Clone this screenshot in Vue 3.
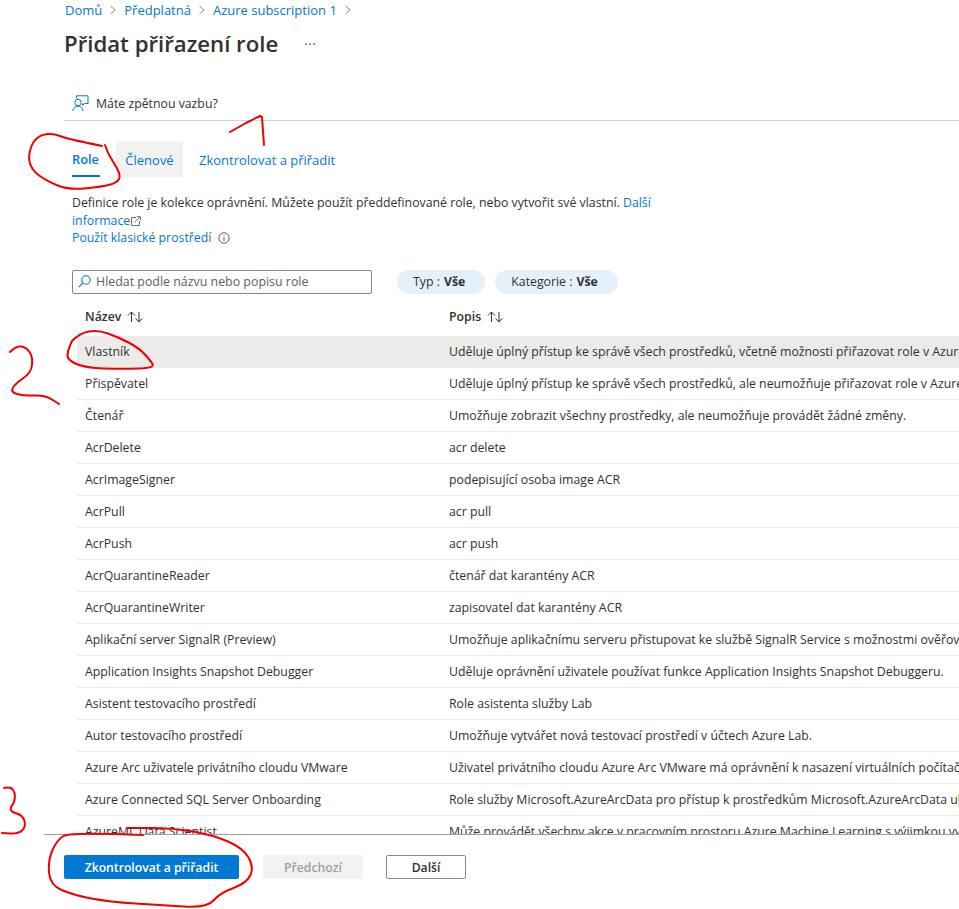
<script setup>
const crumbs = ['Domů', 'Předplatná', 'Azure subscription 1'];

const roles = [
  ['Vlastník', 'Uděluje úplný přístup ke správě všech prostředků, včetně možnosti přiřazovat role v Azure RBAC.'],
  ['Přispěvatel', 'Uděluje úplný přístup ke správě všech prostředků, ale neumožňuje přiřazovat role v Azure RBAC.'],
  ['Čtenář', 'Umožňuje zobrazit všechny prostředky, ale neumožňuje provádět žádné změny.'],
  ['AcrDelete', 'acr delete'],
  ['AcrImageSigner', 'podepisující osoba image ACR'],
  ['AcrPull', 'acr pull'],
  ['AcrPush', 'acr push'],
  ['AcrQuarantineReader', 'čtenář dat karantény ACR'],
  ['AcrQuarantineWriter', 'zapisovatel dat karantény ACR'],
  ['Aplikační server SignalR (Preview)', 'Umožňuje aplikačnímu serveru přistupovat ke službě SignalR Service s možnostmi ověřování AAD.'],
  ['Application Insights Snapshot Debugger', 'Uděluje oprávnění uživatele používat funkce Application Insights Snapshot Debuggeru.'],
  ['Asistent testovacího prostředí', 'Role asistenta služby Lab'],
  ['Autor testovacího prostředí', 'Umožňuje vytvářet nová testovací prostředí v účtech Azure Lab.'],
  ['Azure Arc uživatele privátního cloudu VMware', 'Uživatel privátního cloudu Azure Arc VMware má oprávnění k nasazení virtuálních počítačů.'],
  ['Azure Connected SQL Server Onboarding', 'Role služby Microsoft.AzureArcData pro přístup k prostředkům Microsoft.AzureArcData uloženým'],
  ['AzureML Data Scientist', 'Může provádět všechny akce v pracovním prostoru Azure Machine Learning s výjimkou vytváření'],
];

// smooths the marker points through their midpoints
const smooth = (pts) => {
  let d = `M${pts[0][0]} ${pts[0][1]}`;
  for (let i = 1; i < pts.length - 1; i++) {
    const mx = (pts[i][0] + pts[i + 1][0]) / 2;
    const my = (pts[i][1] + pts[i + 1][1]) / 2;
    d += ` Q${pts[i][0]} ${pts[i][1]} ${mx} ${my}`;
  }
  const last = pts[pts.length - 1];
  return d + ` L${last[0]} ${last[1]}`;
};

const scribbles = [
  smooth([[102, 146], [83, 142], [65, 138], [55, 134], [43, 134], [33, 141], [28, 157], [32, 170], [45, 180], [68, 190], [100, 187], [117, 183], [121, 175], [112, 160], [108, 153], [105, 145]]),
  'M230 132 L246 123 L260 116 L262 117 L264 145',
  smooth([[72, 341], [80, 333], [98, 330], [118, 337], [139, 348], [150, 360], [155, 368], [122, 369], [86, 368], [67, 360], [68, 350], [72, 341]]),
  smooth([[10, 352], [16, 346], [26, 347], [33, 357], [31, 373], [16, 383], [10, 392], [24, 396], [45, 395], [59, 404]]),
  smooth([[4, 788], [13, 786], [16, 800], [8, 811], [23, 815], [26, 827], [18, 834], [2, 833]]),
  smooth([[143, 835], [70, 832], [57, 840], [48, 860], [50, 885], [73, 895], [110, 902], [160, 905], [207, 908], [220, 893], [247, 883], [254, 867], [243, 848], [213, 835], [173, 828], [127, 828]]),
];
</script>

<template>
  <div class="page">
    <nav class="crumbs">
      <template v-for="c in crumbs" :key="c">
        <a>{{ c }}</a>
        <svg class="chev" width="8" height="10" viewBox="0 0 8 10"><path d="M1.5 1 L6 5 L1.5 9" fill="none" stroke="#8a8886" /></svg>
      </template>
    </nav>

    <div class="title-row">
      <h1>Přidat přiřazení role</h1>
      <span class="more">···</span>
    </div>

    <div class="feedback">
      <svg width="17" height="17" viewBox="0 0 17 17" fill="none" stroke="#0078d4">
        <circle cx="6" cy="7.5" r="3.2" />
        <path d="M0.8 16 C1.2 12.8 3.4 11.2 6 11.2 C8.6 11.2 10.6 12.8 11 16" />
        <path d="M4.5 3.5 V0.8 H16 V8.5 H12.5 L10.5 10.5 V8.5" />
      </svg>
      <span>Máte zpětnou vazbu?</span>
    </div>

    <div class="tabs">
      <div class="tab active">Role</div>
      <div class="tab hovered">Členové</div>
      <div class="tab">Zkontrolovat a přiřadit</div>
    </div>

    <div class="intro">
      <p>Definice role je kolekce oprávnění. Můžete použít předdefinované role, nebo vytvořit své vlastní. <a>Další informace</a>
        <svg class="ext" width="10" height="10" viewBox="0 0 10 10" fill="none" stroke="#605e5c" stroke-width="0.9"><path d="M5 1.5 H0.5 V9.5 H8.5 V5" /><path d="M3.5 6.5 L9 1 M5.8 0.6 H9.4 V4.2" /></svg>
      </p>
      <p class="classic">
        <a>Použít klasické prostředí</a>
        <svg width="12" height="12" viewBox="0 0 12 12" fill="none" stroke="#605e5c"><circle cx="6" cy="6" r="5.2" /><path d="M6 5 V9 M6 3 V4" /></svg>
      </p>
    </div>

    <div class="filters">
      <div class="search">
        <svg width="13" height="13" viewBox="0 0 13 13" fill="none" stroke="#0078d4" stroke-width="1.1"><circle cx="8" cy="5" r="4.2" /><path d="M5 8 L0.8 12.2" /></svg>
        <span>Hledat podle názvu nebo popisu role</span>
      </div>
      <div class="pill">Typ : <b>Vše</b></div>
      <div class="pill">Kategorie : <b>Vše</b></div>
    </div>

    <div class="table">
      <div class="row head">
        <div class="cell">Název
          <svg class="sort" width="17" height="12" viewBox="0 0 17 12" fill="none" stroke="#323130"><path d="M4.5 11 V1 M1 4.5 L4.5 1 L8 4.5" /><path d="M12 1 V11 M8.7 7.5 L12 11 L15.5 7.5" /></svg>
        </div>
        <div class="cell">Popis
          <svg class="sort" width="17" height="12" viewBox="0 0 17 12" fill="none" stroke="#323130"><path d="M4.5 11 V1 M1 4.5 L4.5 1 L8 4.5" /><path d="M12 1 V11 M8.7 7.5 L12 11 L15.5 7.5" /></svg>
        </div>
      </div>
      <div v-for="(r, i) in roles" :key="r[0]" class="row" :class="{ selected: i === 0 }">
        <div class="cell">{{ r[0] }}</div>
        <div class="cell">{{ r[1] }}</div>
      </div>
    </div>

    <footer class="actions">
      <button class="btn primary">Zkontrolovat a přiřadit</button>
      <button class="btn disabled">Předchozí</button>
      <button class="btn plain">Další</button>
    </footer>

    <!-- red marker annotations drawn over the page -->
    <svg class="marks" width="959" height="909" viewBox="0 0 959 909" fill="none" stroke="#f00000" stroke-width="2" stroke-linejoin="round" stroke-linecap="round">
      <path v-for="d in scribbles" :key="d" :d="d" />
    </svg>
  </div>
</template>

<style>
body {
  margin: 0;
  background: #fff;
}
</style>

<style scoped>
.page {
  position: relative;
  width: 959px;
  height: 909px;
  display: flex;
  flex-direction: column;
  overflow: hidden;
  font-family: "Open Sans", "Liberation Sans", sans-serif;
  font-size: 12.3px;
  color: #323130;
}

a {
  color: #0078d4;
}

.crumbs {
  height: 20px;
  padding-left: 65px;
  display: flex;
  align-items: center;
  gap: 7px;
  font-size: 13px;
}

.title-row {
  height: 48px;
  padding-left: 64px;
  display: flex;
  align-items: center;
  gap: 26px;
}

h1 {
  margin: 0;
  font-size: 22.2px;
  font-weight: 600;
  line-height: 28px;
}

.more {
  font-size: 12px;
  font-weight: 400;
  letter-spacing: 1px;
}

.feedback {
  height: 53px;
  margin: 0 0 0 64px;
  padding: 26px 0 8px 8px;
  box-sizing: border-box;
  display: flex;
  align-items: center;
  gap: 7px;
  border-bottom: 1px solid #d6d6d6;
}

.tabs {
  margin: 20px 0 0 72px;
  height: 36px;
  display: flex;
  color: #0078d4;
  font-size: 13px;
}

.tab {
  display: flex;
  align-items: center;
  padding-top: 2px;
  box-sizing: border-box;
}

.tab.active {
  width: 28px;
  margin-right: 16px;
  font-size: 12.8px;
  font-weight: 600;
  border-bottom: 2px solid #0078d4;
}

.tab.hovered {
  background: #f3f2f1;
  width: 67px;
  justify-content: center;
  margin-right: 16px;
}

.intro {
  margin: 17px 0 0 72px;
  width: 600px;
  line-height: 17.5px;
}

.intro p {
  margin: 0;
}

.classic {
  display: flex;
  align-items: center;
  gap: 7px;
}

.ext {
  margin-left: 1px;
  vertical-align: -1px;
}

.filters {
  margin: 23px 0 0 72px;
  display: flex;
  align-items: center;
  height: 24px;
}

.search {
  width: 300px;
  height: 24px;
  box-sizing: border-box;
  border: 1px solid #8a8886;
  border-radius: 2px;
  display: flex;
  align-items: center;
  gap: 5px;
  padding-left: 5px;
  color: #605e5c;
  margin-right: 25px;
  font-size: 12.4px;
}

.pill {
  height: 24px;
  padding: 0 20px 0 16px;
  border-radius: 12px;
  background: #e5f1fa;
  display: flex;
  align-items: center;
  gap: 4px;
  margin-right: 10px;
}

.table {
  flex: 1;
  min-height: 0;
  overflow: hidden;
  margin: 10px 0 0 77px;
}

.row {
  display: grid;
  grid-template-columns: 364px 1fr;
  height: 32px;
  padding-top: 1px;
  box-sizing: border-box;
  border-bottom: 1px solid #edebe9;
  white-space: nowrap;
}

.row.head {
  padding: 0 0 6px;
  border-bottom: 0;
  font-weight: 600;
}

.row.selected {
  background: #edebe9;
}

.cell {
  display: flex;
  align-items: center;
  padding-left: 8px;
  gap: 6px;
  overflow: hidden;
}

.actions {
  height: 75px;
  flex: none;
  margin-left: 44px;
  padding: 20px 0 0 20px;
  box-sizing: border-box;
  border-top: 1px solid #a19f9d;
  background: #fff;
  display: flex;
  align-items: flex-start;
}

.btn {
  height: 24px;
  border-radius: 2px;
  font-family: inherit;
  font-size: 12.2px;
  font-weight: 600;
  padding: 0;
  border: 1px solid transparent;
}

.primary {
  width: 175px;
  background: #0078d4;
  color: #fff;
  margin-right: 24px;
}

.disabled {
  width: 100px;
  background: #f3f2f1;
  color: #a19f9d;
  margin-right: 23px;
}

.plain {
  width: 80px;
  background: #fff;
  border-color: #8a8886;
  color: #323130;
}

.marks {
  position: absolute;
  left: 0;
  top: 0;
  pointer-events: none;
}
</style>
